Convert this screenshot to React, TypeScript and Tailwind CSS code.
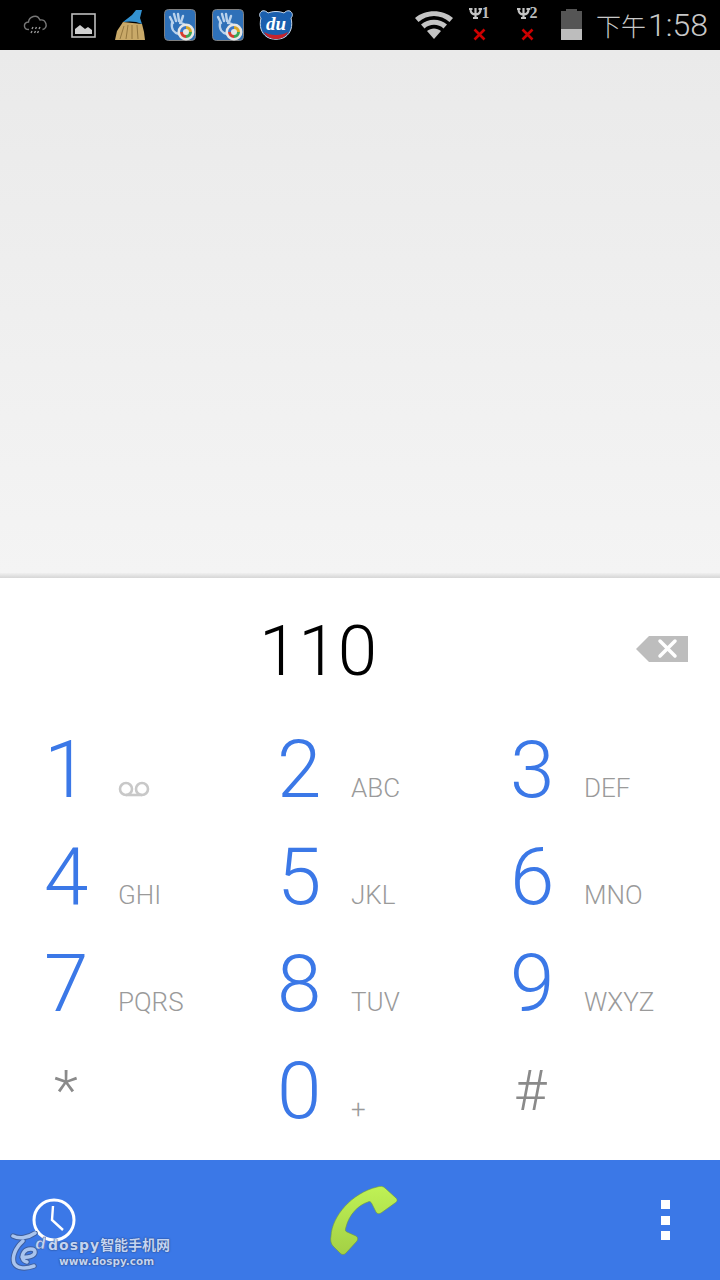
import React from 'react';

const keys = [
  { d: '1', l: '' },
  { d: '2', l: 'ABC' },
  { d: '3', l: 'DEF' },
  { d: '4', l: 'GHI' },
  { d: '5', l: 'JKL' },
  { d: '6', l: 'MNO' },
  { d: '7', l: 'PQRS' },
  { d: '8', l: 'TUV' },
  { d: '9', l: 'WXYZ' },
  { d: '*', l: '' },
  { d: '0', l: '+' },
  { d: '#', l: '' },
];

const AppIcon = () => (
  <svg width="32" height="32" viewBox="0 0 32 32">
    <rect x="0.5" y="0.5" width="31" height="31" rx="4" fill="#2e70b8" stroke="#808080" />
    <path d="M6 8l3 6M10 5l2 7M14 5l1 7M19 7l-2 6M8 14c-1 6 2 10 7 11" stroke="#b9d2ec" strokeWidth="2.400" fill="none" strokeLinecap="round" />
    <path d="M15 14c4 0 6 1 6 3" stroke="#b9d2ec" strokeWidth="2" fill="none" />
    <circle cx="22" cy="23" r="8.500" fill="#e6e6e6" />
    <path d="M22 17a6 6 0 0 1 6 6h-3a3 3 0 0 0-3-3z" fill="#d9a826" />
    <path d="M28 23a6 6 0 0 1-6 6v-3a3 3 0 0 0 3-3z" fill="#3aa655" />
    <path d="M22 29a6 6 0 0 1-6-6h3a3 3 0 0 0 3 3z" fill="#d63b2f" />
    <path d="M16 23a6 6 0 0 1 6-6v3a3 3 0 0 0-3 3z" fill="#3b78c9" />
  </svg>
);

const SimSlot = ({ n }: { n: string }) => (
  <div className="flex flex-col items-center w-[24px] h-[34px] mt-[-2px]">
    <div className="flex items-center h-[12px] text-[16px] font-bold text-[#bbbbbb] leading-none" style={{ fontFamily: '"Liberation Serif", serif' }}>
      <svg width="13" height="11" viewBox="0 0 13 11">
        <path d="M0 1h3.500M9.500 1h3.500M1.500 1c0 4 2 5.500 5 5.500s5-1.500 5-5.500M6.500 0v10M4 10h5" stroke="#c4c4c4" strokeWidth="2.200" fill="none" />
      </svg>
      {n}
    </div>
    <svg width="13" height="13" viewBox="0 0 13 13" className="mt-[9px]">
      <path d="M1.500 1.500l10 10M11.500 1.500l-10 10" stroke="#cc0000" strokeWidth="2.600" />
    </svg>
  </div>
);

const StatusBar = () => (
  <div className="h-[50px] bg-black flex items-center shrink-0 pl-[23px] pr-[12px]">
    <svg width="25" height="22" viewBox="0 0 25 22" fill="none" stroke="#777777" strokeWidth="1.400">
      <path d="M6 15.500c-6 0-6-7-.5-7.500C6 3 14-1 17 6c6-1 9 8 2.500 9.500" />
      <path d="M10 13l-1 2M13.500 13l-1 2M17 13l-1 2M9 17l-1 2M12.500 17l-1 2M15.500 17l-1 2" stroke="#999999" />
    </svg>
    <svg width="25" height="25" viewBox="0 0 25 25" className="ml-[23px]">
      <rect x="1" y="1" width="23" height="23" fill="none" stroke="#bdbdbd" strokeWidth="1.600" />
      <path d="M4 21v-5l5-4 5 4 3-2 4 3v4z" fill="#d0d0d0" />
    </svg>
    <svg width="32" height="32" viewBox="0 0 32 32" className="ml-[19px]">
      <path d="M8 13L2 22 0 31h30l-1-8-2-8z" fill="#c9a968" />
      <path d="M5 30l4-13M11 30l2-14M17 30l0-14M23 30l-1-14" stroke="#94773f" strokeWidth="1" />
      <path d="M8 13l9-7 4-5 6 0-2 8 2 6c-6-3-13-3-19-2z" fill="#3392d1" />
    </svg>
    <div className="ml-[17px] flex gap-[16px]">
      <AppIcon />
      <AppIcon />
    </div>
    <svg width="36" height="32" viewBox="0 0 36 32" className="ml-[14px]">
      <path d="M4 2c3-1 5 1 6 2 5-2 11-2 16 0 1-1 3-3 6-2 3 2 3 5 1 7 2 8 0 15-6 19-5 3-13 3-18 0C3 24 1 17 3 9 1 7 1 4 4 2z" fill="#1a5fae" stroke="#c8d8ea" strokeWidth="1" />
      <path d="M6 23c6 4 18 4 24 0-3 6-8 7-12 7s-9-1-12-7z" fill="#c8242b" />
      <text x="18" y="21" textAnchor="middle" fill="#ffffff" fontSize="19" fontWeight="700" fontStyle="italic" style={{ fontFamily: '"Liberation Serif", serif' }}>du</text>
    </svg>
    <div className="flex-1" />
    <svg width="38" height="30" viewBox="0 0 38 30" className="mt-[-2px]">
      <path d="M0 9c10-9 28-9 38 0l-3.500 4C26 5 12 5 3.500 13z" fill="#c4c4c4" />
      <path d="M6 15.500c7-6.500 19-6.500 26 0l-3.500 4c-5-5-14-5-19 0z" fill="#c4c4c4" />
      <path d="M12 22c4-3.500 10-3.500 14 0l-7 8z" fill="#c4c4c4" />
    </svg>
    <div className="ml-[14px] flex gap-[24px]">
      <SimSlot n="1" />
      <SimSlot n="2" />
    </div>
    <div className="ml-[22px] flex flex-col items-center w-[21px] h-[31px] mt-[-2px]">
      <div className="w-[11px] h-[2px] bg-[#555555]" />
      <div className="w-[21px] h-[18px] bg-[#555555]" />
      <div className="w-[21px] h-[11px] bg-[#bdbdbd]" />
    </div>
    <span className="ml-[14px] text-[32px] leading-none text-[#c8c8c8] font-light whitespace-nowrap">
      <span className="text-[25px] mr-[2px]" style={{ fontFamily: '"Noto Sans CJK SC", sans-serif' }}>下午</span>1:58
    </span>
  </div>
);

const VoicemailIcon = () => (
  <svg width="32" height="16" viewBox="0 0 32 16" fill="none" stroke="#c8c8c8" strokeWidth="2.600" className="mb-[-1px]">
    <circle cx="8" cy="8" r="6" />
    <circle cx="24" cy="8" r="6" />
    <path d="M8 14h16" />
  </svg>
);

const DialKey = ({ d, l }: { d: string; l: string }) => {
  const symbol = d === '*' || d === '#';
  return (
    <div className="h-[107px] flex items-baseline">
      <span className={`w-[74px] text-[80px] leading-[107px] font-light ${symbol ? 'text-[#8a8a8a]' : 'text-[#3b78e7]'}`}>
        {symbol ? <span className={d === '#' ? 'text-[56px] pl-[4px] align-[15px]' : 'text-[56px] pl-[10px] align-[15px]'}>{d}</span> : d}
      </span>
      {d === '1' ? (
        <VoicemailIcon />
      ) : (
        <span className="text-[26px] font-light text-[#9a9a9a] leading-none">{l}</span>
      )}
    </div>
  );
};

const App: React.FC = () => {
  return (
    <div className="w-[720px] h-[1280px] flex flex-col overflow-hidden bg-white" style={{ fontFamily: 'Roboto, sans-serif' }}>
      <StatusBar />

      <div className="flex-1 flex flex-col">
        <div className="flex-1 bg-gradient-to-b from-[#eaeaea] to-[#f4f4f4]" />
        <div className="h-[5px] bg-gradient-to-b from-[#f0f0f0] to-[#d6d6d6]" />
      </div>

      <div className="h-[582px] shrink-0 flex flex-col">
        <div className="h-[139px] flex items-center pr-[32px] shrink-0">
          <div className="flex-1 text-center text-[71px] font-light text-black leading-none mt-[5px]">110</div>
          <svg width="52" height="26" viewBox="0 0 52 26" className="mt-[3px]">
            <path d="M13 0h39v26H13L0 13z" fill="#bdbdbd" />
            <path d="M24 5l15 15M39 5L24 20" stroke="#ffffff" strokeWidth="3.500" strokeLinecap="round" />
          </svg>
        </div>
        <div className="grid grid-cols-[233px_233px_233px] pl-[44px]">
          {keys.map((k) => (
            <DialKey key={k.d} d={k.d} l={k.l} />
          ))}
        </div>
      </div>

      <div className="relative h-[120px] shrink-0 bg-[#3b78e7] flex items-center justify-between pl-[31px] pr-[50px]">
        <svg width="46" height="46" viewBox="0 0 46 46" fill="none" stroke="#ffffff">
          <circle cx="23" cy="23" r="20" strokeWidth="3" />
          <path d="M22 9l-1 14 11 10" strokeWidth="2.400" />
        </svg>
        <svg width="70" height="70" viewBox="0 0 70 70" className="mr-[8px] mt-[2px]">
          <defs>
            <linearGradient id="call" x1="0" y1="0" x2="0" y2="1">
              <stop offset="0" stopColor="#bff255" />
              <stop offset="1" stopColor="#a3d045" />
            </linearGradient>
          </defs>
          <path d="M1 50C2 30 22 7 47 1c3-1 6-1 8 1l11 10c2 2 1 4-1 5L51 27c-2 1-4 1-5-1l-4-8c-1-2-2-3-4-2-10 3-19 13-22 25-1 3-1 4 1 5l9 4c2 1 2 3 1 5L16 67c-2 2-4 2-6 0l-7-7C1 58 0 54 1 50z" fill="url(#call)" stroke="#6f9a3a" strokeWidth="0.600" />
        </svg>
        <div className="flex flex-col gap-[6.500px]">
          <div className="w-[9px] h-[9px] bg-white" />
          <div className="w-[9px] h-[9px] bg-white" />
          <div className="w-[9px] h-[9px] bg-white" />
        </div>

        {/* watermark sits over the bar */}
        <div className="absolute left-[10px] top-[71px] flex items-start">
          <svg width="36" height="40" viewBox="0 0 36 40" fill="none" strokeLinecap="round">
            <g stroke="#3f5f9e" strokeWidth="5.500">
              <path d="M3 5c6 3 15 2 22-3" />
              <path d="M13 10C5 17 2 26 4 32c3 6 12 6 20 3" />
              <path d="M12 26c6 1 13-1 13-5s-8-4-11 0-2 9 3 10" />
            </g>
            <g stroke="#a9c4ee" strokeWidth="3.500">
              <path d="M3 5c6 3 15 2 22-3" />
              <path d="M13 10C5 17 2 26 4 32c3 6 12 6 20 3" />
              <path d="M12 26c6 1 13-1 13-5s-8-4-11 0-2 9 3 10" />
            </g>
            <text x="25" y="18" fill="#c3d4f3" stroke="#3f5f9e" strokeWidth="0.500" fontSize="15" fontWeight="700" fontStyle="italic" style={{ fontFamily: '"DejaVu Sans", sans-serif' }}>d</text>
          </svg>
          <div className="ml-[2px] flex flex-col text-[#c3d4f3]" style={{ textShadow: '0 0 2px #24447f, 0 0 1px #24447f' }}>
            <div className="text-[14px] font-bold leading-[20px] whitespace-nowrap mt-[4px]" style={{ fontFamily: '"DejaVu Sans", "Noto Sans CJK SC", sans-serif' }}>
              <span className="tracking-[1px]">dospy</span>智能手机网
            </div>
            <div className="text-[10.500px] font-bold leading-[14px] ml-[11px] mt-[-1px]" style={{ fontFamily: '"DejaVu Sans", sans-serif' }}>www.dospy.com</div>
          </div>
        </div>
      </div>
    </div>
  );
};

export default App;
